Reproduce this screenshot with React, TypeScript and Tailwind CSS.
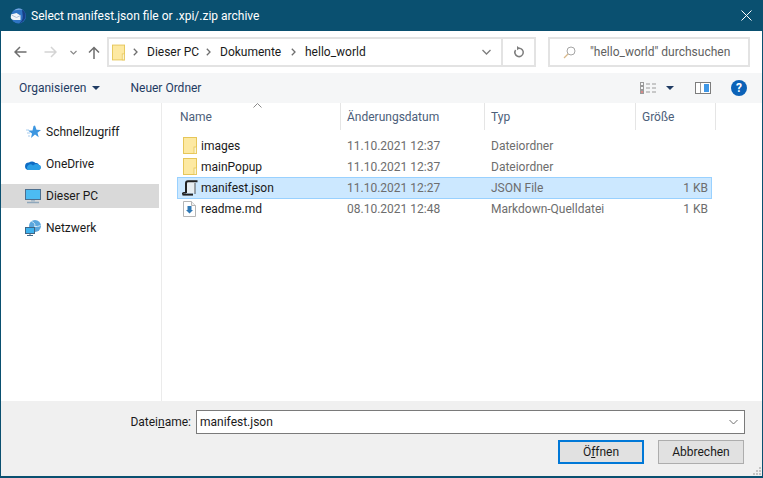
import type { ReactNode } from "react";

type FileRow = {
  name: string;
  date: string;
  type: string;
  size?: string;
  icon: "folder" | "json" | "md";
  selected?: boolean;
};

const files: FileRow[] = [
  { name: "images", date: "11.10.2021 12:37", type: "Dateiordner", icon: "folder" },
  { name: "mainPopup", date: "11.10.2021 12:37", type: "Dateiordner", icon: "folder" },
  { name: "manifest.json", date: "11.10.2021 12:27", type: "JSON File", size: "1 KB", icon: "json", selected: true },
  { name: "readme.md", date: "08.10.2021 12:48", type: "Markdown-Quelldatei", size: "1 KB", icon: "md" },
];

function FolderIcon({ w = 14, h = 17 }: { w?: number; h?: number }) {
  return (
    <svg width={w} height={h} viewBox="0 0 14 17" className="shrink-0">
      <rect x="0.5" y="0.5" width="13" height="16" fill="#fde9a2" stroke="#e6c659" />
      <rect x="11" y="10" width="2.500" height="6.500" fill="#fbf3d0" stroke="#e6c659" strokeWidth="0.800" />
    </svg>
  );
}

function FileIcon({ kind }: { kind: FileRow["icon"] }) {
  if (kind === "folder") return <FolderIcon />;
  if (kind === "json")
    return (
      <svg width="16" height="16" viewBox="0 0 16 16" className="shrink-0">
        <rect x="5" y="2" width="8" height="11" fill="#e8eef2" />
        <path d="M13 3v11" stroke="#555" />
        <path d="M4 13V3.500Q4 1.200 6 1.200H15.500" fill="none" stroke="#222" strokeWidth="2" />
        <path d="M.5 14.500Q.5 12.800 2 12.800H4" fill="none" stroke="#222" strokeWidth="1.500" />
        <path d="M.5 14.600H11" stroke="#222" strokeWidth="2" />
      </svg>
    );
  return (
    <svg width="13" height="16" viewBox="0 0 13 16" className="shrink-0">
      <path d="M.5.5h8l4 4v11H.5z" fill="#fff" stroke="#b5b5b5" />
      <path d="M8.500.5v4h4" fill="#efefef" stroke="#b5b5b5" />
      <path d="M4.500 5h4v4h1.500L6.500 12.500 3 9h1.500z" fill="#2f78b5" />
    </svg>
  );
}

function NavItem({ label, icon, active }: { label: string; icon: ReactNode; active?: boolean }) {
  return (
    <div className={`flex h-6 w-[158px] items-center ${active ? "bg-[#d9d9d9]" : ""}`}>
      <div className="flex w-[45px] shrink-0 justify-end pr-[5px]">{icon}</div>
      <span>{label}</span>
    </div>
  );
}

function ColumnHeader({ label, width, pad = "pl-[6px]" }: { label: string; width: string; pad?: string }) {
  return (
    <div className={`flex h-full items-center border-r border-[#e5e5e5] text-[#4c607a] ${width} ${pad}`}>{label}</div>
  );
}

function Chevron({ className = "" }: { className?: string }) {
  return (
    <svg width="5" height="8" viewBox="0 0 5 8" className={`shrink-0 ${className}`}>
      <path d="M.8.8L4 4 .8 7.200" fill="none" stroke="#6e6e6e" strokeWidth="1.300" />
    </svg>
  );
}

export default function App() {
  return (
    <div className="flex h-[478px] w-[763px] flex-col overflow-hidden border-x border-b-2 border-[#0a5070] bg-white text-[12px] leading-none text-[#1a1a1a] [font-family:Roboto,sans-serif]">
      {/* title bar */}
      <div className="flex h-[31px] shrink-0 items-center bg-[#0a5070] pl-[9px] pr-[10px] text-white">
        <svg width="16" height="16" viewBox="0 0 16 16" className="mr-[5px] shrink-0">
          <circle cx="8.500" cy="8" r="7.500" fill="#2f74c4" />
          <path d="M4 2.500A7.500 7.500 0 0 1 13 2c-2-.5-5-.5-9 .5z" fill="#79a9de" />
          <path d="M12 1.500c2.800 1.700 4 4.500 3.500 7.500-.6 2.800-3 5.800-6.500 6.500 2.500-2 3.800-3.500 3.800-7z" fill="#173f86" />
          <path d="M1 6.500L6.500 5l4 2.500V12H4C2 12 1 11 .8 9.500z" fill="#f2f4f8" />
          <path d="M1.500 7L6.500 9.500 10.500 7.500" fill="none" stroke="#9db4d6" strokeWidth="0.800" />
        </svg>
        <span className="flex-1">Select manifest.json file or .xpi/.zip archive</span>
        <svg width="11" height="11" viewBox="0 0 11 11">
          <path d="M.5.5l10 10M10.500.5l-10 10" stroke="#fff" strokeWidth="1" />
        </svg>
      </div>

      {/* navigation */}
      <div className="flex h-[42px] shrink-0 items-center pl-[13px]">
        <svg width="13" height="12" viewBox="0 0 13 12" className="shrink-0">
          <path d="M12.500 6H1.500M6 1L1 6l5 5" fill="none" stroke="#6e6e6e" strokeWidth="1.500" />
        </svg>
        <svg width="13" height="12" viewBox="0 0 13 12" className="ml-[17px] shrink-0">
          <path d="M.5 6h11M7 1l5 5-5 5" fill="none" stroke="#d4d4d4" strokeWidth="1.500" />
        </svg>
        <svg width="7" height="5" viewBox="0 0 7 5" className="ml-[13px] shrink-0">
          <path d="M.5 1l3 3 3-3" fill="none" stroke="#8a8a8a" strokeWidth="1.200" />
        </svg>
        <svg width="12" height="13" viewBox="0 0 12 13" className="ml-[11px] shrink-0">
          <path d="M6 13V1.500M1 6.500l5-5 5 5" fill="none" stroke="#6e6e6e" strokeWidth="1.500" />
        </svg>
        <div className="ml-[7px] flex h-[30px] w-[429px] shrink-0 items-center border-2 border-[#e3e3e3]">
          <div className="ml-[3px]">
            <FolderIcon w={13} h={17} />
          </div>
          <Chevron className="ml-[8px]" />
          <span className="ml-[9px] w-[59px]">Dieser PC</span>
          <Chevron />
          <span className="ml-[9px] w-[71px]">Dokumente</span>
          <Chevron />
          <span className="ml-[9px]">hello_world</span>
          <div className="flex-1" />
          <svg width="9" height="6" viewBox="0 0 9 6" className="mr-[10px]">
            <path d="M.5 1l4 4 4-4" fill="none" stroke="#7d7d7d" strokeWidth="1.300" />
          </svg>
          <div className="flex h-full w-[33px] items-center justify-center border-l-2 border-[#e3e3e3]">
            <svg width="12" height="12" viewBox="0 0 12 12">
              <path d="M6 2.200a4.200 4.200 0 1 1-3.400 1.800" fill="none" stroke="#7d7d7d" strokeWidth="1.500" />
              <path d="M4 0l3 2.200-3 2z" fill="#7d7d7d" />
            </svg>
          </div>
        </div>
        <div className="ml-[12px] flex h-[30px] w-[202px] shrink-0 items-center border-2 border-[#e3e3e3] text-[#5f5f5f]">
          <svg width="13" height="13" viewBox="0 0 13 13" className="ml-[13px]">
            <circle cx="8" cy="5" r="4" fill="none" stroke="#a5a5a5" />
            <path d="M5 8l-4 4" stroke="#d9b98b" strokeWidth="1.300" />
          </svg>
          <span className="ml-[14px]">"hello_world" durchsuchen</span>
        </div>
      </div>

      {/* toolbar */}
      <div className="flex h-[30px] shrink-0 items-center bg-[#f5f6f7] pl-[18px] pr-[15px] text-[#1f3b63]">
        <span>Organisieren</span>
        <svg width="8" height="4" viewBox="0 0 8 4" className="ml-[6px]">
          <path d="M0 0h8L4 4z" fill="#1f3b63" />
        </svg>
        <span className="ml-[30px]">Neuer Ordner</span>
        <div className="flex-1" />
        <svg width="16" height="12" viewBox="0 0 16 12">
          <rect x=".5" y=".5" width="3" height="3" fill="none" stroke="#9a9a9a" />
          <rect x=".5" y="4.500" width="3" height="3" fill="none" stroke="#9a9a9a" />
          <rect x=".5" y="8.500" width="3" height="3" fill="#d98a8a" stroke="#9a9a9a" />
          <path d="M6 2h4m2 0h4M6 6h4m2 0h4M6 10h4m2 0h4" stroke="#9a9a9a" />
        </svg>
        <svg width="8" height="4" viewBox="0 0 8 4" className="ml-[10px]">
          <path d="M0 0h8L4 4z" fill="#1f3b63" />
        </svg>
        <svg width="16" height="12" viewBox="0 0 16 12" className="ml-[21px]">
          <rect x=".5" y=".5" width="15" height="11" fill="#fff" stroke="#7d7d7d" />
          <rect x="9" y="2" width="5" height="8" fill="#3f97e6" />
          <path d="M5.500 1v10" stroke="#9a9a9a" />
        </svg>
        <div className="ml-[20px] flex size-4 items-center justify-center rounded-full bg-[#0b62b8] text-[12px] font-bold text-white">?</div>
      </div>

      {/* body */}
      <div className="flex min-h-0 flex-1">
        <div className="w-[161px] shrink-0 border-r border-[#ebebeb] pr-px pt-[17px]">
          <div className="flex flex-col gap-2">
            <NavItem
              label="Schnellzugriff"
              icon={
                <svg width="15" height="14" viewBox="0 0 15 14">
                  <path d="M9 .5l1.500 4.200 4.500.2-3.500 2.800 1.200 4.500L9 9.500 5 13l1-4.500L2 5.500h4.500L7.500 1z" fill="#3c96e0" />
                  <path d="M0 5h3M1 8h3M2 11h2" stroke="#a8cdee" />
                </svg>
              }
            />
            <NavItem
              label="OneDrive"
              icon={
                <svg width="16" height="11" viewBox="0 0 16 11">
                  <path d="M3 11h10.500a2.500 2.500 0 0 0 .5-4.900 3 3 0 0 0-3.500-2A4.500 4.500 0 0 0 4 3.500 3.800 3.800 0 0 0 3 11z" fill="#0f6cc4" />
                  <path d="M3 11h10.500a2.500 2.500 0 0 0 .5-4.900 4 4 0 0 0-6 .4 3 3 0 0 0-5 4.500z" fill="#2b9fe6" />
                </svg>
              }
            />
            <NavItem
              active
              label="Dieser PC"
              icon={
                <svg width="16" height="15" viewBox="0 0 16 15">
                  <rect x=".5" y=".5" width="15" height="10" fill="#4cbcf2" stroke="#4c6f8f" />
                  <path d="M6 11h4v1.500H6z" fill="#a8bac9" />
                  <path d="M2 13.500h12" stroke="#8fa7bb" strokeWidth="1.500" />
                </svg>
              }
            />
            <NavItem
              label="Netzwerk"
              icon={
                <svg width="16" height="16" viewBox="0 0 16 16">
                  <circle cx="10" cy="6" r="6" fill="#5aa6dd" />
                  <path d="M6.500 1.500c3 1 4 3 3 5 2 0 4 0 6-1" fill="none" stroke="#d6ebf8" />
                  <rect x=".5" y="7.500" width="9" height="6" fill="#3db2ee" stroke="#3f6686" />
                  <path d="M2 15.500h6M5 14v1" stroke="#3f6686" />
                </svg>
              }
            />
          </div>
        </div>

        <div className="min-w-0 flex-1">
          <div className="relative flex h-[27px] items-center">
            <svg width="9" height="5" viewBox="0 0 9 5" className="absolute left-[91px] top-0">
              <path d="M.5 4.500l4-4 4 4" fill="none" stroke="#8a8a8a" />
            </svg>
            <ColumnHeader label="Name" width="w-[179px]" pad="pl-[18px]" />
            <ColumnHeader label="Änderungsdatum" width="w-[144px]" />
            <ColumnHeader label="Typ" width="w-[151px]" />
            <ColumnHeader label="Größe" width="w-[80px]" />
          </div>
          <div className="mt-[5px] pl-[15px]">
            {files.map((f) => (
              <div
                key={f.name}
                className={`flex h-[21.200px] w-[535px] items-center border ${
                  f.selected ? "border-[#99d1ff] bg-[#cce8ff]" : "border-transparent"
                }`}
              >
                <div className="flex w-[23px] shrink-0 justify-center">
                  <FileIcon kind={f.icon} />
                </div>
                <span className="w-[146px] shrink-0">{f.name}</span>
                <span className="w-[144px] shrink-0 text-[#6d6d6d]">{f.date}</span>
                <span className="w-[146px] shrink-0 text-[#6d6d6d]">{f.type}</span>
                <span className="w-[71px] shrink-0 text-right text-[#6d6d6d]">{f.size}</span>
              </div>
            ))}
          </div>
        </div>
      </div>

      {/* footer */}
      <div className="relative flex h-[75px] shrink-0 flex-col items-end bg-[#f0f0f0] pr-[17px] pt-[9px]">
        <div className="flex items-center">
          <label className="mr-[5px]">
            Datei<span className="underline">n</span>ame:
          </label>
          <div className="flex h-[24px] w-[549px] items-center justify-between border border-[#7a7a7a] bg-white pl-[3px] pr-[6px]">
            <span>manifest.json</span>
            <svg width="9" height="6" viewBox="0 0 9 6">
              <path d="M.5 1l4 4 4-4" fill="none" stroke="#707070" />
            </svg>
          </div>
        </div>
        <div className="mr-px mt-[6px] flex gap-[14px]">
          <button className="h-[24px] w-[86px] border-2 border-[#0078d7] bg-[#e1e1e1]">
            Ö<span className="underline">f</span>fnen
          </button>
          <button className="h-[24px] w-[86px] border border-[#adadad] bg-[#e1e1e1]">Abbrechen</button>
        </div>
        <svg width="8" height="8" viewBox="0 0 8 8" className="absolute bottom-[1px] right-[1px]">
          <path d="M6 0h2v2H6zM3 3h2v2H3zM6 3h2v2H6zM0 6h2v2H0zM3 6h2v2H3zM6 6h2v2H6z" fill="#c4c4c4" />
        </svg>
      </div>
    </div>
  );
}
